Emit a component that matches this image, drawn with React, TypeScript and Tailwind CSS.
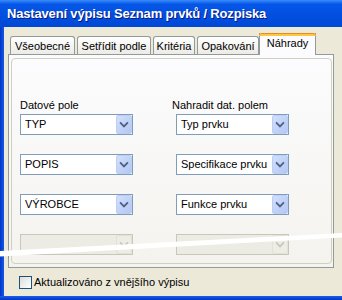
import React from "react";

const Chevron = ({ disabled }: { disabled?: boolean }) => (
  <svg width="15" height="17" viewBox="0 0 15 17">
    <polyline
      points="4,7 7.5,10.5 11,7"
      fill="none"
      stroke={disabled ? "#C9C7BA" : "#4D6185"}
      strokeWidth="2"
      strokeLinecap="square"
    />
  </svg>
);

function Combo({ text, disabled }: { text?: string; disabled?: boolean }) {
  return (
    <div
      className={`h-[21px] w-[113px] flex items-stretch border ${
        disabled ? "border-[#C9C7BA] bg-[#EDECE4]" : "border-[#7F9DB9] bg-white"
      }`}
    >
      <div className="flex-1 flex items-center pl-[4px] text-black leading-[13px] whitespace-nowrap overflow-hidden">
        {text}
      </div>
      <div
        className={`w-[16px] flex items-center justify-center rounded-[2px] border ${
          disabled
            ? "border-[#E3E1D6] bg-[#EEEDE5]"
            : "border-[#BCCEF7] bg-linear-to-br from-[#D3E0FC] to-[#B3C7F4]"
        }`}
      >
        <Chevron disabled={disabled} />
      </div>
    </div>
  );
}

function Tab({ label, w }: { label: string; w: string }) {
  return (
    <div
      className={`${w} h-[18px] rounded-t-[3px] border border-b-0 border-[#919B9C] bg-linear-to-b from-[#FFFFFF] to-[#ECEBE5] flex justify-center pt-[3px] leading-[13px] whitespace-nowrap`}
    >
      {label}
    </div>
  );
}

export default function App() {
  const left = ["TYP", "POPIS", "VÝROBCE"];
  const right = ["Typ prvku", "Specifikace prvku", "Funkce prvku"];
  return (
    <div className="relative w-[342px] h-[300px] overflow-hidden bg-[#ECE9D8] flex flex-col font-['Liberation_Sans',Arial,sans-serif] text-[11px] text-black">
      {/* Title bar */}
      <div className="h-[27px] shrink-0 bg-linear-to-b from-[#3B8CFB] via-[#0556E8] via-15% to-[#0048D6] flex items-center pl-[7px] pt-[1px]">
        <span className="text-white font-bold text-[13px] tracking-[-0.17px] leading-[16px] whitespace-nowrap [text-shadow:1px_1px_0_#0A1883]">
          Nastavení výpisu Seznam prvků / Rozpiska
        </span>
      </div>

      <div className="flex-1 flex">
        {/* left frame */}
        <div className="w-[4px] bg-linear-to-r from-[#0733C8] via-[#0A48DA] to-[#1259E6]" />
        <div className="flex-1 flex flex-col">
          {/* tabs */}
          <div className="flex items-end gap-[2px] pl-[6px] pt-[6px] h-[27px]">
            <Tab label="Všeobecné" w="w-[65px]" />
            <Tab label="Setřídit podle" w="w-[74px]" />
            <Tab label="Kritéria" w="w-[42px]" />
            <Tab label="Opakování" w="w-[62px]" />
            <div className="relative z-10 -mb-[1px] -ml-[2px] w-[57px] h-[22px] flex flex-col border-x border-[#919B9C] bg-[#FCFCFE]">
              <div className="-mx-[1px] h-[3px] rounded-t-[3px] border-t border-[#E68B2C] bg-[#FFC83C]" />
              <div className="flex justify-center pt-[1px] leading-[13px] whitespace-nowrap">Náhrady</div>
            </div>
          </div>
          {/* panel */}
          <div className="ml-[4px] w-[326px] h-[214px] border border-[#919B9C] bg-linear-to-b from-[#FCFCFE] to-[#F4F3EE] pt-[3px] pl-[2px] pr-[1px] pb-[3px]">
            <div className="h-full rounded-[4px] border border-[#D0D0BF] flex pt-[40px] pl-[8px]">
              <div className="w-[113px] flex flex-col">
                <div className="leading-[13px] h-[13px]">Datové pole</div>
                <div className="mt-[2px] flex flex-col gap-[19px]">
                  {left.map((t) => (
                    <Combo key={t} text={t} />
                  ))}
                  <Combo disabled />
                </div>
              </div>
              <div className="ml-[39px] flex flex-col">
                <div className="leading-[13px] h-[13px]">Nahradit dat. polem</div>
                <div className="mt-[2px] ml-[4px] flex flex-col gap-[19px]">
                  {right.map((t) => (
                    <Combo key={t} text={t} />
                  ))}
                  <Combo disabled />
                </div>
              </div>
            </div>
          </div>
          {/* checkbox */}
          <div className="mt-[8px] ml-[15px] flex items-center gap-[2px]">
            <div className="w-[13px] h-[13px] border border-[#1C5180] bg-linear-to-br from-[#DCDCD7] to-white" />
            <span className="leading-[13px] whitespace-nowrap">Aktualizováno z vnějšího výpisu</span>
          </div>
        </div>
      </div>
      {/* bottom frame */}
      <div className="h-[4px] shrink-0 bg-linear-to-b from-[#1A5EE6] to-[#0733C8]" />

      {/* torn edge overlay */}
      <svg className="absolute left-0 top-0 pointer-events-none" width="342" height="300" viewBox="0 0 342 300">
        <polygon points="0,251 342,233 342,237.5 0,256.5" fill="#FFFFFF" />
      </svg>
    </div>
  );
}
